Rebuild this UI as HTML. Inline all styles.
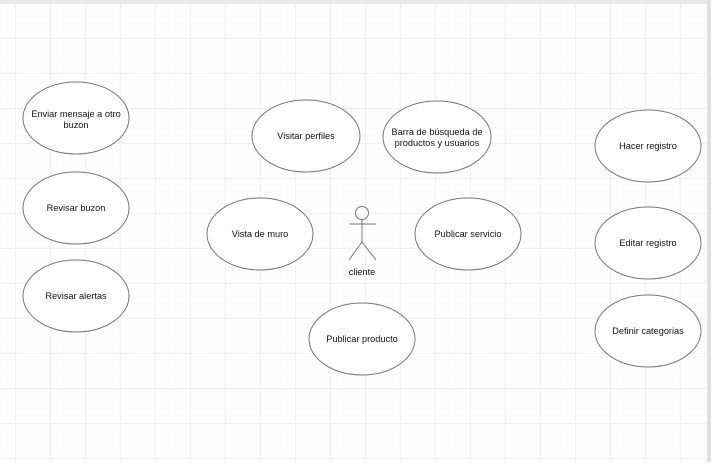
<!DOCTYPE html><html><head><style>
body{margin:0;width:711px;height:462px;overflow:hidden;background:#fff;font-family:"Liberation Sans",Arial,sans-serif}
</style></head><body>
<svg width="711" height="462" xmlns="http://www.w3.org/2000/svg" font-family="Liberation Sans, Arial, sans-serif" font-size="9.2" fill="#111">
<defs>
<pattern id="minor" width="7" height="7" patternUnits="userSpaceOnUse" x="1" y="3"><path d="M7 0V7M0 7H7" stroke="#f8f8f8" stroke-width="1" fill="none"/></pattern>
<pattern id="major" width="35" height="35" patternUnits="userSpaceOnUse" x="15" y="3"><path d="M0.5 0V35M0 0.5H35" stroke="#f0f0f0" stroke-width="1" fill="none"/></pattern>
</defs>
<rect width="711" height="462" fill="#fff"/>
<rect width="711" height="462" fill="url(#minor)"/>
<rect width="711" height="462" fill="url(#major)"/>
<rect x="0" y="0" width="711" height="4" fill="#e8e8e8"/>
<rect x="707" y="0" width="4" height="462" fill="#e0e0e0"/>
<g fill="#fff" stroke="#777" stroke-width="1">
<ellipse cx="76" cy="118" rx="53" ry="36"/>
<ellipse cx="76" cy="208" rx="53" ry="36"/>
<ellipse cx="76" cy="296" rx="53" ry="36"/>
<ellipse cx="306" cy="136" rx="54" ry="36"/>
<ellipse cx="437" cy="137" rx="54" ry="36"/>
<ellipse cx="260" cy="234" rx="53" ry="36"/>
<ellipse cx="468" cy="234" rx="53" ry="36"/>
<ellipse cx="362" cy="339" rx="53" ry="36"/>
<ellipse cx="648" cy="146" rx="53" ry="36"/>
<ellipse cx="648" cy="243" rx="53" ry="36"/>
<ellipse cx="648" cy="331" rx="53" ry="36"/>
</g>
<g text-anchor="middle">
<text x="76" y="117">Enviar mensaje a otro</text>
<text x="76" y="128">buzon</text>
<text x="76" y="211">Revisar buzon</text>
<text x="76" y="299">Revisar alertas</text>
<text x="306" y="139">Visitar perfiles</text>
<text x="437" y="135">Barra de búsqueda de</text>
<text x="437" y="146">productos y usuarios</text>
<text x="260" y="237">Vista de muro</text>
<text x="468" y="237">Publicar servicio</text>
<text x="362" y="342">Publicar producto</text>
<text x="648" y="149">Hacer registro</text>
<text x="648" y="246">Editar registro</text>
<text x="648" y="334">Definir categorias</text>
<text x="362" y="275">cliente</text>
</g>
<g stroke="#777" stroke-width="1" fill="#fff">
<circle cx="362" cy="213" r="6.5"/>
<path d="M362 219.5V242M349 224H376M362 242L349 260M362 242L376 260" fill="none"/>
</g>
</svg>
</body></html>
